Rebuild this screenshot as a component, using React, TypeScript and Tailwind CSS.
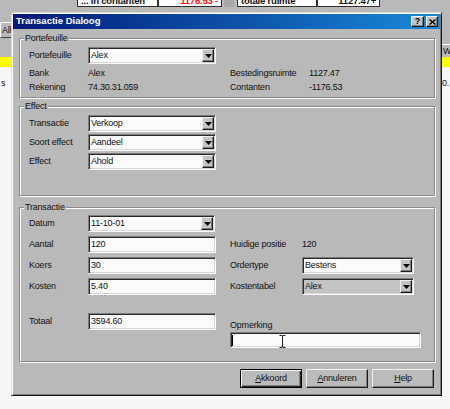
import React from "react";

const sunken =
  "border border-t-[#7c7c7c] border-l-[#7c7c7c] border-r-white border-b-white shadow-[inset_1px_1px_0_#2a2a2a,inset_-1px_-1px_0_#d6d6d6]";
const raised =
  "border border-t-[#f2f2f2] border-l-[#f2f2f2] border-r-[#1c1c1c] border-b-[#1c1c1c] shadow-[inset_-1px_-1px_0_#7e7e7e]";

function Arrow() {
  return (
    <span className={`ml-auto mr-[1px] flex h-[13px] w-[12px] shrink-0 items-center justify-center bg-[#c4c4c4] ${raised}`}>
      <svg width="7" height="4" viewBox="0 0 7 4">
        <path d="M0 0h7L3.5 4z" fill="#000" />
      </svg>
    </span>
  );
}

function Combo({ value, className = "", disabled = false }: { value: string; className?: string; disabled?: boolean }) {
  return (
    <div
      className={`flex h-[17px] shrink-0 items-center ${sunken} ${disabled ? "bg-[#c3c3c3]" : "bg-[#fbfbfb]"} ${className}`}
    >
      <span className="pl-[2px] leading-none">{value}</span>
      <Arrow />
    </div>
  );
}

function TextBox({ value, className = "" }: { value: string; className?: string }) {
  return (
    <div className={`flex h-[17px] shrink-0 items-center bg-[#fbfbfb] ${sunken} ${className}`}>
      <span className="pl-[2px] leading-none">{value}</span>
    </div>
  );
}

function Group({ title, className = "", children }: { title: string; className?: string; children?: React.ReactNode }) {
  return (
    <div className={`relative border border-[#8a8a8a] shadow-[inset_1px_1px_0_#fff,1px_1px_0_#fff] ${className}`}>
      <span className="absolute -top-[6px] left-[4px] bg-[#b9b9b9] px-[1px] leading-[11px]">{title}</span>
      {children}
    </div>
  );
}

function Row({ label, children, labelWidth = "w-[59px]" }: { label: string; children?: React.ReactNode; labelWidth?: string }) {
  return (
    <div className="flex h-[17px] items-center">
      <span className={`${labelWidth} shrink-0 leading-none`}>{label}</span>
      {children}
    </div>
  );
}

function Button({ children, primary = false }: { children: React.ReactNode; primary?: boolean }) {
  return (
    <div
      className={`flex h-[19px] w-[62px] items-center justify-center bg-[#bbbbbb] leading-none ${
        primary
          ? "border border-black shadow-[inset_1px_1px_0_#f4f4f4,inset_-1px_-1px_0_#2a2a2a,inset_-2px_-2px_0_#808080]"
          : raised
      }`}
    >
      {children}
    </div>
  );
}

function Cell({ children, className = "" }: { children: React.ReactNode; className?: string }) {
  return (
    <div
      className={`-mt-[10px] flex h-[17px] items-end border border-[#303030] bg-white px-[3px] text-[9.5px] font-bold leading-[11px] ${className}`}
    >
      {children}
    </div>
  );
}

export default function App() {
  return (
    <div className="relative h-[409px] w-[450px] overflow-hidden font-['Liberation_Sans',Arial,sans-serif] text-[9px] tracking-[-0.2px] text-[#111]">
      {/* application behind the dialog */}
      <div className="flex h-full flex-col bg-[#b9b9b9]">
        <div className="flex h-[13px] items-start">
          <div className="w-[77px]" />
          <Cell className="w-[81px]">... in contanten</Cell>
          <Cell className="w-[64px] justify-end text-[#ff1010]">1176.53 -</Cell>
          <div className="-mt-[10px] ml-[2px] h-[17px] w-[10px] bg-[#a8a8a8]" />
          <div className="w-[3px]" />
          <Cell className="w-[80px]">totale ruimte</Cell>
          <Cell className="w-[63px] justify-end">1127.47+</Cell>
        </div>
        <div className="h-[9px]" />
        <div className="flex h-[16px]">
          <div className="w-[12px] overflow-hidden border-l border-t border-b border-l-white border-t-white border-b-[#404040] pl-[1px] leading-[14px]">
            Alle
          </div>
        </div>
        <div className="flex h-[19px] items-end justify-end">
          <div className="h-[13px] w-[9px] border-l border-t border-white pl-[1px] leading-[12px]">W</div>
        </div>
        <div className="h-[10px] bg-[#ffff00]" />
        <div className="flex flex-1 flex-col bg-[#f6f6f6]">
          <div className="flex h-[21px] items-end justify-between leading-[10px]">
            <span className="pl-[1px]">s</span>
            <span className="w-[8px]">0.</span>
          </div>
        </div>
      </div>

      {/* dialog window */}
      <div className="absolute left-[11px] top-[12px] flex h-[384px] w-[431px] flex-col border border-t-[#dcdcdc] border-l-[#dcdcdc] border-r-[#151515] border-b-[#151515] bg-[#b9b9b9] p-[1px] shadow-[inset_1px_1px_0_#fff,inset_-1px_-1px_0_#7a7a7a]">
        <div className="flex h-[15px] shrink-0 items-center bg-gradient-to-r from-[#07187a] via-[#0e4fa8] to-[#1a8ad6] pl-[3px] pr-[2px]">
          <span className="text-[9.5px] font-bold tracking-normal text-white">Transactie Dialoog</span>
          <div className="ml-auto flex gap-[2px]">
            <span className={`flex h-[11px] w-[13px] items-center justify-center bg-[#c4c4c4] text-[9px] font-bold leading-none text-black ${raised}`}>
              ?
            </span>
            <span className={`flex h-[11px] w-[12px] items-center justify-center bg-[#c4c4c4] ${raised}`}>
              <svg width="7" height="6" viewBox="0 0 7 6">
                <path d="M0.5 0.5L6.5 5.5M6.5 0.5L0.5 5.5" stroke="#000" strokeWidth="1.4" />
              </svg>
            </span>
          </div>
        </div>

        <div className="flex flex-col pl-[6px] pr-[5px]">
          <Group title="Portefeuille" className="mt-[9px] h-[60px] pl-[9px] pt-[8px]">
            <Row label="Portefeuille">
              <Combo value="Alex" className="w-[128px]" />
            </Row>
            <div className="mt-[2px] grid grid-cols-[59px_142px_79px_auto] grid-rows-[14px_14px] items-center leading-none">
              <span>Bank</span>
              <span>Alex</span>
              <span>Bestedingsruimte</span>
              <span>1127.47</span>
              <span>Rekening</span>
              <span>74.30.31.059</span>
              <span>Contanten</span>
              <span>-1176.53</span>
            </div>
          </Group>

          <Group title="Effect" className="mt-[8px] h-[90px] pl-[9px] pt-[8px]">
            <div className="flex flex-col gap-[2px]">
              <Row label="Transactie">
                <Combo value="Verkoop" className="w-[128px]" />
              </Row>
              <Row label="Soort effect">
                <Combo value="Aandeel" className="w-[128px]" />
              </Row>
              <Row label="Effect">
                <Combo value="Ahold" className="w-[128px]" />
              </Row>
            </div>
          </Group>

          <Group title="Transactie" className="mt-[11px] h-[155px] pl-[9px] pt-[7px]">
            <div className="flex gap-[14px]">
              <div className="flex w-[187px] flex-col gap-[4px]">
                <Row label="Datum">
                  <Combo value="11-10-01" className="w-[127px]" />
                </Row>
                <Row label="Aantal">
                  <TextBox value="120" className="w-[128px]" />
                </Row>
                <Row label="Koers">
                  <TextBox value="30" className="w-[128px]" />
                </Row>
                <Row label="Kosten">
                  <TextBox value="5.40" className="w-[128px]" />
                </Row>
                <div className="mt-[14px]">
                  <Row label="Totaal">
                    <TextBox value="3594.60" className="w-[128px]" />
                  </Row>
                </div>
              </div>
              <div className="flex flex-col gap-[4px]">
                <div className="h-[17px]" />
                <Row label="Huidige positie" labelWidth="w-[72px]">
                  <span className="leading-none">120</span>
                </Row>
                <Row label="Ordertype" labelWidth="w-[72px]">
                  <Combo value="Bestens" className="w-[112px]" />
                </Row>
                <Row label="Kostentabel" labelWidth="w-[72px]">
                  <Combo value="Alex" className="w-[112px]" disabled />
                </Row>
                <span className="mt-[20px] leading-[12px]">Opmerking</span>
                <div className={`relative -mt-[3px] flex h-[16px] w-[191px] items-center bg-[#fbfbfb] ${sunken}`}>
                  <span className="ml-[1px] h-[11px] w-[1px] bg-black" />
                  <svg className="absolute left-[48px] top-[2px]" width="7" height="13" viewBox="0 0 7 13">
                    <path d="M0.5 0.5h2.5l0.5 0.5 0.5-0.5h2.5M3.5 1v11M0.5 12.5h2.5l0.5-0.5 0.5 0.5h2.5" stroke="#222" strokeWidth="1" fill="none" />
                  </svg>
                </div>
              </div>
            </div>
          </Group>

          <div className="mt-[7px] flex justify-end gap-[4px] pr-[1px]">
            <Button primary>
              <span>
                <span className="underline">A</span>kkoord
              </span>
            </Button>
            <Button>
              <span>
                <span className="underline">A</span>nnuleren
              </span>
            </Button>
            <Button>
              <span>
                <span className="underline">H</span>elp
              </span>
            </Button>
          </div>
        </div>
      </div>
    </div>
  );
}
